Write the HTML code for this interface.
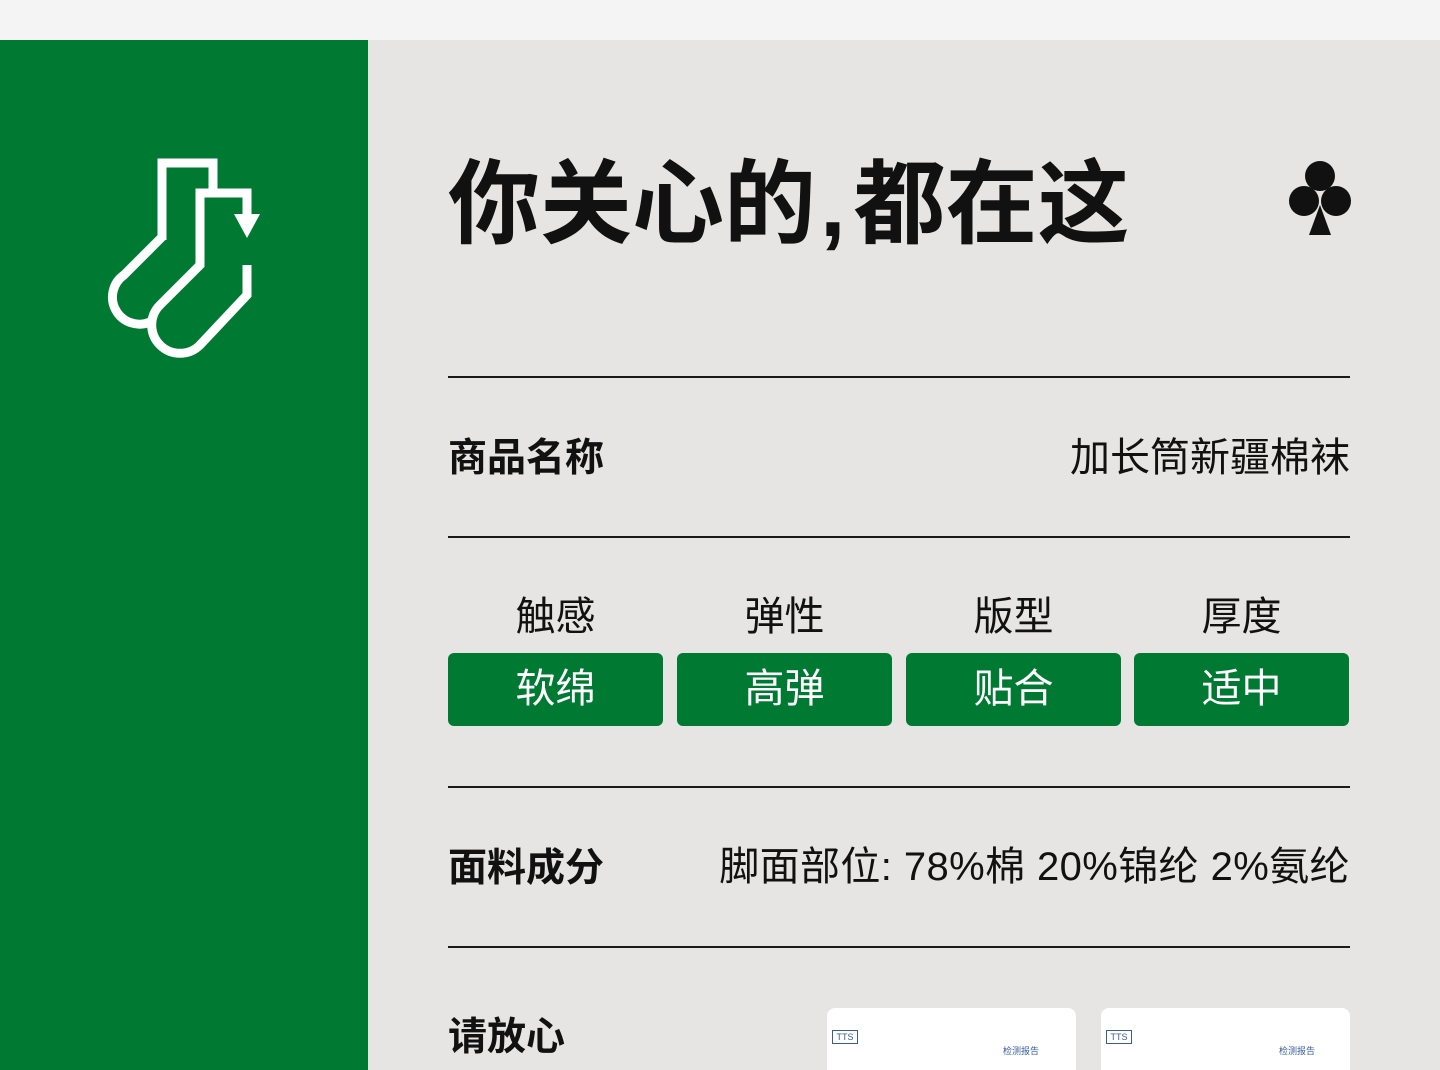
<!DOCTYPE html>
<html><head><meta charset="utf-8"><style>
*{margin:0;padding:0;box-sizing:border-box}
html,body{width:1440px;height:1070px;overflow:hidden}
body{background:#f4f4f4;font-family:"Liberation Sans","Noto Sans CJK SC",sans-serif;position:relative;color:#111}
.green{position:absolute;left:0;top:40px;width:368px;height:1030px;background:#007a33}
.main{position:absolute;left:368px;top:40px;width:1072px;height:1030px;background:#e6e5e3}
.a{position:absolute}
.line{position:absolute;left:448px;width:902px;height:2px;background:#1a1a1a}
.lbl{font-size:39px;font-weight:bold;line-height:1}
.val{font-size:40px;line-height:1}
.hd{position:absolute;top:597px;width:215px;text-align:center;font-size:40px;line-height:1}
.btn{position:absolute;top:653px;width:215px;height:73px;background:#007a33;border-radius:6px;color:#fff;font-size:40px;text-align:center;line-height:73px}
.card{position:absolute;top:1008px;width:249px;height:62px;background:#fff;border-radius:8px 8px 0 0}
</style></head><body>
<div class="green"></div>
<div class="main"></div>
<svg class="a" style="left:0;top:0" width="368" height="400" viewBox="0 0 368 400">
<g fill="none" stroke="#fff" stroke-width="9" stroke-linejoin="miter">
<path d="M162 240 V163 H213 V193 H247 V220"/>
<path d="M162 237 L124 275 A27 27 0 0 0 150 322"/>
<path d="M213 193 H200 V265 L160 305 A27 27 0 0 0 200 345 L247 295 V265"/>
</g>
<path d="M234 214 H260 L247 238 Z" fill="#fff"/>
</svg>
<div class="a" style="left:448px;top:150px;font-size:92px;font-weight:bold;line-height:110px;white-space:nowrap">你关心的<span style="margin:0 8px 0 4px">,</span>都在这</div>
<svg class="a" style="left:1285px;top:155px" width="70" height="85" viewBox="1285 155 70 85">
<circle cx="1320" cy="176" r="15" fill="#111"/><circle cx="1304" cy="201" r="15" fill="#111"/><circle cx="1336" cy="201" r="15" fill="#111"/>
<path d="M1320 205 L1309 235 H1331 Z" fill="#111"/>
</svg>
<div class="line" style="top:376px"></div>
<div class="a lbl" style="left:448px;top:439px">商品名称</div>
<div class="a val" style="right:90px;top:438px">加长筒新疆棉袜</div>
<div class="line" style="top:536px"></div>
<div class="hd" style="left:448px">触感</div><div class="hd" style="left:677px">弹性</div><div class="hd" style="left:906px">版型</div><div class="hd" style="left:1134px">厚度</div>
<div class="btn" style="left:448px">软绵</div><div class="btn" style="left:677px">高弹</div><div class="btn" style="left:906px">贴合</div><div class="btn" style="left:1134px">适中</div>
<div class="line" style="top:786px"></div>
<div class="a lbl" style="left:448px;top:849px">面料成分</div>
<div class="a val" style="right:90px;top:847px;white-space:nowrap;letter-spacing:0.4px">脚面部位: 78%棉 20%锦纶 2%氨纶</div>
<div class="line" style="top:946px"></div>
<div class="a lbl" style="left:448px;top:1018px">请放心</div>
<div class="card" style="left:827px"></div>
<div class="card" style="left:1101px"></div>
<div class="a" style="left:832px;top:1030px;width:26px;height:14px;border:1px solid #3a5c9a;font-size:9px;color:#3a5c9a;text-align:center;line-height:12px">TTS</div>
<div class="a" style="left:1106px;top:1030px;width:26px;height:14px;border:1px solid #3a5c9a;font-size:9px;color:#3a5c9a;text-align:center;line-height:12px">TTS</div>
<div class="a" style="left:1003px;top:1044px;font-size:9px;color:#3a5c9a">检测报告</div>
<div class="a" style="left:1279px;top:1044px;font-size:9px;color:#3a5c9a">检测报告</div>
</body></html>
